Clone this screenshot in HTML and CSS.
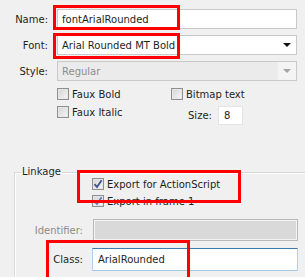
FILE: index.html
```html
<!DOCTYPE html>
<html lang="en">

<head>
    <meta charset="UTF-8">
    <meta name="viewport" content="width=device-width, initial-scale=1.0">
    <title>Font Symbol Properties</title>
    <link rel="stylesheet" href="styles.css">
</head>

<body>
    <div class="panel">
        <div class="props">
            <div class="row">
                <label class="lbl">Name:</label>
                <div class="field">fontArialRounded</div>
            </div>
            <div class="row">
                <label class="lbl">Font:</label>
                <div class="field select">
                    <span class="sel_text">Arial Rounded MT Bold</span>
                    <span class="arrow_box"><span class="arrow"></span></span>
                </div>
            </div>
            <div class="row">
                <label class="lbl">Style:</label>
                <div class="field select disabled">
                    <span class="sel_text">Regular</span>
                    <span class="arrow_box"><span class="arrow"></span></span>
                </div>
            </div>
        </div>

        <div class="opts">
            <div class="check"><span class="cb"></span>Faux Bold</div>
            <div class="check"><span class="cb"></span>Bitmap text</div>
            <div class="check"><span class="cb"></span>Faux Italic</div>
            <div class="size">
                <span>Size:</span>
                <div class="field small">8</div>
            </div>
        </div>

        <fieldset class="linkage">
            <legend>Linkage</legend>
            <div class="lk_checks">
                <div class="check">
                    <span class="cb checked">
                        <svg viewBox="0 0 10 10" width="10" height="10"><path d="M1.5 5.2 L4 8 L8.6 1.2" fill="none" stroke="#3f5193" stroke-width="1.8"/></svg>
                    </span>Export for ActionScript
                </div>
                <div class="check">
                    <span class="cb checked">
                        <svg viewBox="0 0 10 10" width="10" height="10"><path d="M1.5 5.2 L4 8 L8.6 1.2" fill="none" stroke="#6a7aae" stroke-width="1.8"/></svg>
                    </span>Export in frame 1
                </div>
            </div>
            <div class="row ident">
                <label class="lbl wide grey">Identifier:</label>
                <div class="field off"></div>
            </div>
            <div class="row cls">
                <label class="lbl wide">Class:</label>
                <div class="field focus">ArialRounded</div>
            </div>
        </fieldset>

        <!-- annotation boxes drawn over the dialog -->
        <div class="mark mark_name"></div>
        <div class="mark mark_font"></div>
        <div class="mark mark_export"></div>
        <div class="mark mark_class"></div>
    </div>
</body>

</html>
```

FILE: styles.css
```css
body {
    margin: 0;
    background-color: #f0f0f0;
    font-family: "DejaVu Sans", Verdana, sans-serif;
    font-size: 10px;
    color: #1e1e1e;
}

.panel {
    position: relative;
    width: 305px;
    height: 277px;
    overflow: hidden;
}

.props {
    display: flex;
    flex-direction: column;
    gap: 6px;
    padding-top: 9px;
}

.row {
    display: flex;
    align-items: center;
    gap: 9px;
}

.lbl {
    width: 48px;
    text-align: right;
}

.lbl.wide {
    width: 68px;
}

.grey {
    color: #8b8b8b;
}

.field {
    box-sizing: border-box;
    width: 240px;
    height: 20px;
    border: 1px solid #c9c9c9;
    background-color: #fff;
    padding-left: 4px;
    display: flex;
    align-items: center;
}

.select {
    padding-left: 0;
}

.sel_text {
    flex: 1;
    padding-left: 4px;
    height: 100%;
    display: flex;
    align-items: center;
}

.arrow_box {
    width: 18px;
    height: 100%;
    display: flex;
    align-items: center;
    justify-content: center;
}

.arrow {
    width: 0;
    height: 0;
    border-left: 4px solid transparent;
    border-right: 4px solid transparent;
    border-top: 4px solid #111;
}

.disabled {
    background-color: #f4f4f4;
    color: #8d8d8d;
}

.disabled .sel_text {
    background-color: #ebebeb;
}

.disabled .arrow {
    border-top-color: #a5a5a5;
}

.opts {
    margin: 7px 0 0 57px;
    display: grid;
    grid-template-columns: 114px auto;
    row-gap: 6px;
    align-items: start;
}

.check {
    display: flex;
    align-items: center;
    gap: 3px;
    height: 12px;
}

.cb {
    box-sizing: border-box;
    width: 12px;
    height: 12px;
    border: 1px solid #8e8f8f;
    background: linear-gradient(135deg, #d4d4d4, #f7f7f7);
    box-shadow: inset 0 0 0 1px #e6e6e6;
    display: flex;
    align-items: center;
    justify-content: center;
}

.size {
    display: flex;
    align-items: center;
    gap: 6px;
    padding-left: 17px;
}

.field.small {
    width: 25px;
    height: 19px;
    border-color: #e4e4e4;
    padding-left: 5px;
}

.linkage {
    margin: 41px 0 0 14px;
    padding: 0;
    border: 1px solid #d8d8d8;
    border-right: none;
    border-bottom: none;
    box-shadow: inset 1px 1px 0 #fff;
    height: 200px;
}

.linkage legend {
    margin-left: 6px;
    padding: 0 1px;
    line-height: 12px;
}

.lk_checks {
    display: flex;
    flex-direction: column;
    gap: 5px;
    padding-left: 77px;
}

.ident {
    margin-top: 12px;
}

.cls {
    margin-top: 7px;
}

.field.off {
    width: 205px;
    height: 22px;
    margin-left: 1px;
    background-color: #d9d9d9;
    border-color: #b9b9b9;
    box-shadow: inset 0 0 0 1px #f4f4f4;
}

.field.focus {
    width: 206px;
    height: 23px;
    border-color: #3d7bad #b5cfe7 #a4c9e3 #b5cfe7;
    padding-left: 5px;
}

.mark {
    position: absolute;
    box-sizing: border-box;
    border: 3px solid #f00;
}

.mark_name {
    left: 53px;
    top: 5px;
    width: 127px;
    height: 25px;
}

.mark_font {
    left: 53px;
    top: 33px;
    width: 127px;
    height: 26px;
}

.mark_export {
    left: 77px;
    top: 170px;
    width: 164px;
    height: 33px;
}

.mark_class {
    left: 46px;
    top: 240px;
    width: 144px;
    height: 40px;
}
```
